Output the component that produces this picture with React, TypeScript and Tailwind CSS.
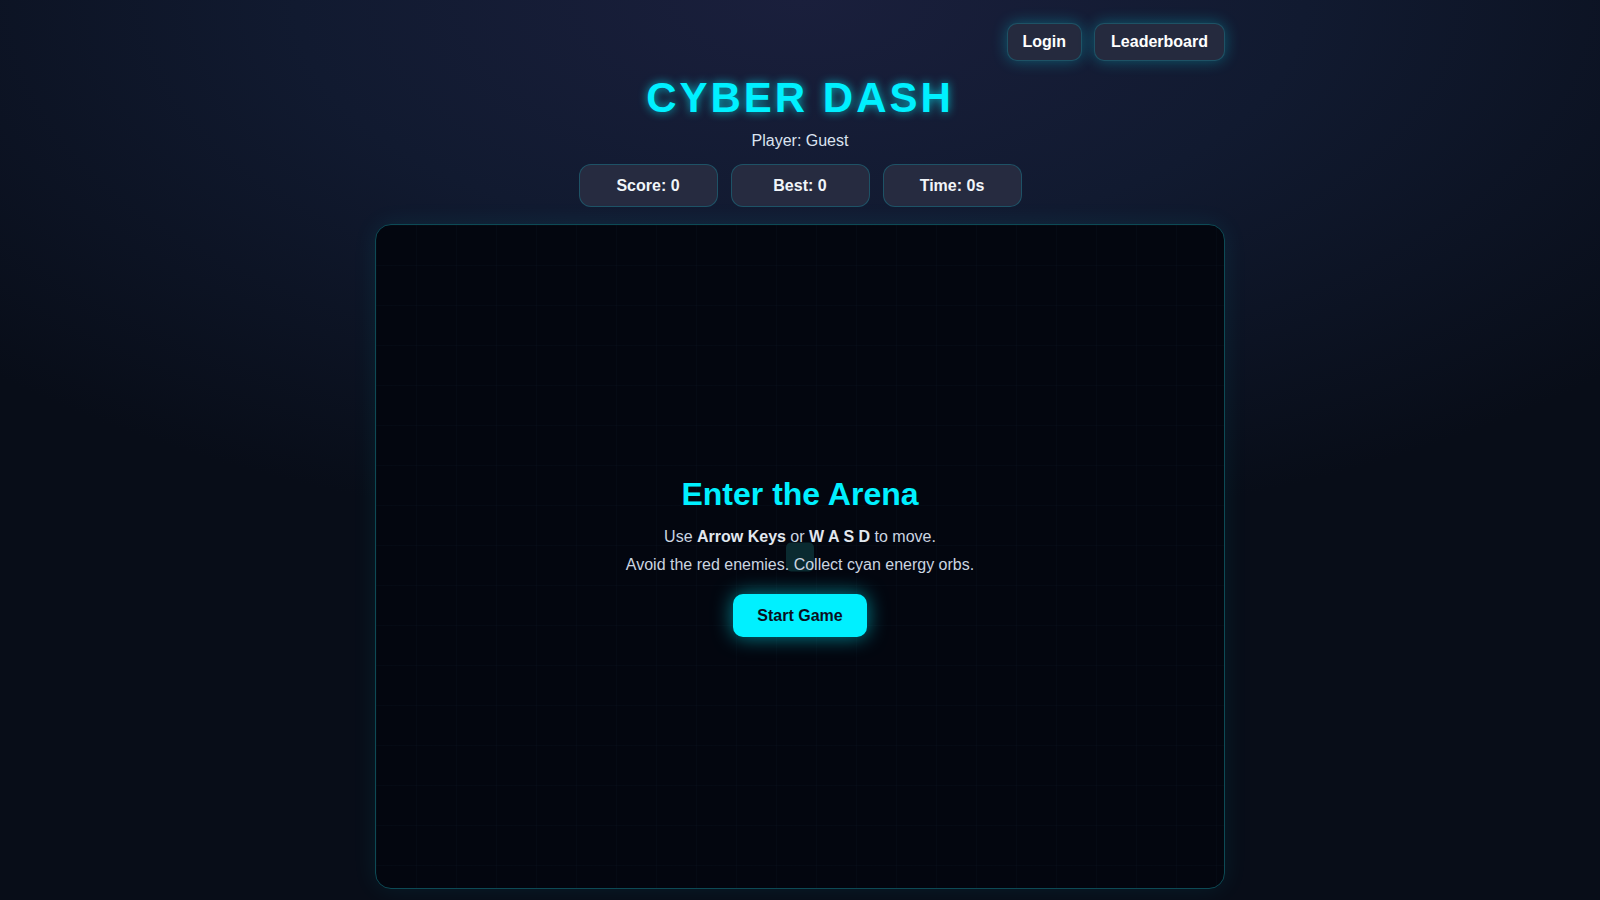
import { Fragment } from 'react';

const stats = [
  { label: 'Score', value: '0' },
  { label: 'Best', value: '0' },
  { label: 'Time', value: '0s' },
];

const App = () => {
  return (
    <div className="min-h-screen w-full bg-[radial-gradient(ellipse_70%_60%_at_50%_0%,#1a1f3c_0%,#111a30_45%,#080d18_100%)] font-['Liberation_Sans',Arial,sans-serif] text-white overflow-hidden">
      <div className="max-w-[850px] mx-auto flex flex-col">
        <div className="flex justify-end gap-3 pt-[23px]">
          <button className="h-[38px] px-[15px] rounded-[10px] bg-[#252a3e] border border-[#00f0ff]/20 text-[16px] font-bold text-white shadow-[0_0_15px_rgba(0,240,255,0.3)]">
            Login
          </button>
          <button className="h-[38px] px-4 rounded-[10px] bg-[#252a3e] border border-[#00f0ff]/20 text-[16px] font-bold text-white shadow-[0_0_15px_rgba(0,240,255,0.3)]">
            Leaderboard
          </button>
        </div>

        <h1 className="mt-[13px] text-center text-[42px] leading-[48px] font-bold tracking-[3px] text-[#00f0ff] [text-shadow:0_0_10px_rgba(0,240,255,0.7)]">
          CYBER DASH
        </h1>
        <p className="mt-[10px] text-center text-[16px] leading-[18px] text-[#dbe3f0]">Player: Guest</p>

        <div className="mt-[14px] flex justify-center gap-[13px]">
          {stats.map((s) => (
            <div
              key={s.label}
              className="w-[139px] h-[43px] rounded-[12px] bg-[#262b40] border border-[#00f0ff]/20 flex items-center justify-center text-[16px] font-bold text-[#f1f5f9]"
            >
              {s.label}: {s.value}
            </div>
          ))}
        </div>

        <div className="relative mt-[17px] h-[665px] rounded-[16px] border border-[#0d4a55] bg-[#03060f] shadow-[0_0_25px_rgba(0,240,255,0.08)] overflow-hidden">
          {/* grid */}
          <div className="absolute inset-0 bg-[linear-gradient(rgba(40,80,120,0.05)_1px,transparent_1px),linear-gradient(90deg,rgba(40,80,120,0.05)_1px,transparent_1px)] bg-[size:40px_40px] bg-[position:0_0]" />
          {/* player under overlay */}
          <div className="absolute left-1/2 top-1/2 -translate-x-1/2 -translate-y-1/2 w-[28px] h-[29px] rounded-[5px] bg-[#0a2a30]" />

          <div className="relative h-full flex flex-col items-center justify-center text-center">
            <h2 className="text-[32px] leading-[37px] font-bold text-[#00f0ff]">Enter the Arena</h2>
            <p className="mt-[15px] text-[16px] leading-[18px] text-[#cbd5e1]">
              Use <b className="text-[#e2e8f0]">Arrow Keys</b> or <b className="text-[#e2e8f0]">W A S D</b> to move.
            </p>
            <p className="mt-[10px] text-[16px] leading-[18px] text-[#cbd5e1]">
              Avoid the red enemies. Collect cyan energy orbs.
            </p>
            <button className="mt-[20px] h-[43px] px-6 rounded-[10px] bg-[#00f0ff] text-[16px] font-bold text-[#0a0f1e] shadow-[0_0_20px_rgba(0,240,255,0.55)]">
              Start Game
            </button>
          </div>
        </div>
      </div>
    </div>
  );
};

export default App;
